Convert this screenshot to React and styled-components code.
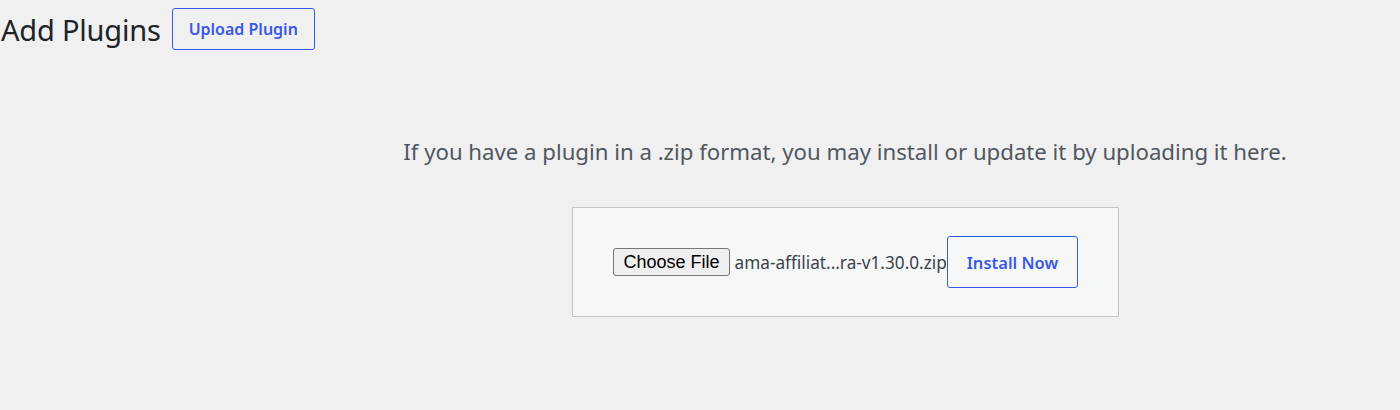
import React from 'react';
import styled, { createGlobalStyle } from 'styled-components';

const GlobalStyle = createGlobalStyle`
  html, body {
    margin: 0;
    padding: 0;
    background: #f0f0f1;
  }
  body {
    font-family: "Noto Sans", "Open Sans", sans-serif;
    color: #3c434a;
  }
`;

const Page = styled.div`
  width: 1400px;
  height: 410px;
  background: #f0f0f1;
  overflow: hidden;
`;

const Header = styled.div`
  display: flex;
  align-items: center;
  gap: 11px;
  padding: 8px 0 0 1px;
`;

const Title = styled.h1`
  margin: 0;
  font-size: 29px;
  font-weight: 400;
  color: #1d2327;
  letter-spacing: -0.2px;
`;

const OutlineButton = styled.button`
  font-family: "Noto Sans", "Open Sans", sans-serif;
  font-size: ${p => p.size || 17}px;
  font-weight: 600;
  color: #3858e9;
  background: transparent;
  border: 1px solid #3858e9;
  border-radius: 3px;
  height: ${p => p.h}px;
  padding: 0 ${p => p.px}px;
  cursor: pointer;
`;

const UploadArea = styled.div`
  padding: 86px 0 0 290px;
  display: flex;
  flex-direction: column;
  align-items: center;
`;

const Help = styled.p`
  margin: 0 0 39px;
  font-size: 22.2px;
  line-height: 32px;
  color: #50575e;
`;

const UploadForm = styled.form`
  width: 466px;
  height: 108px;
  padding: 0 39px 0 40px;
  background: #f6f7f7;
  border: 1px solid #c3c4c7;
  display: flex;
  align-items: center;
`;

const FileButton = styled.span`
  font-family: "Liberation Sans", Arial, sans-serif;
  font-size: 18px;
  color: #000;
  background: #efefef;
  border: 1px solid #767676;
  border-radius: 3px;
  height: 26px;
  padding: 0 9px 0 10px;
  display: flex;
  align-items: center;
  margin-right: 5px;
`;

const FileName = styled.span`
  font-size: 17.2px;
  color: #3c434a;
  white-space: nowrap;
`;

export default function App() {
  return (
    <Page>
      <GlobalStyle />
      <Header>
        <Title>Add Plugins</Title>
        <OutlineButton h={42} px={16} size={16}>Upload Plugin</OutlineButton>
      </Header>
      <UploadArea>
        <Help>If you have a plugin in a .zip format, you may install or update it by uploading it here.</Help>
        <UploadForm>
          <FileButton>Choose File</FileButton>
          <FileName>ama-affiliat...ra-v1.30.0.zip</FileName>
          <OutlineButton h={52} px={19} size={16.5}>Install Now</OutlineButton>
        </UploadForm>
      </UploadArea>
    </Page>
  );
}
